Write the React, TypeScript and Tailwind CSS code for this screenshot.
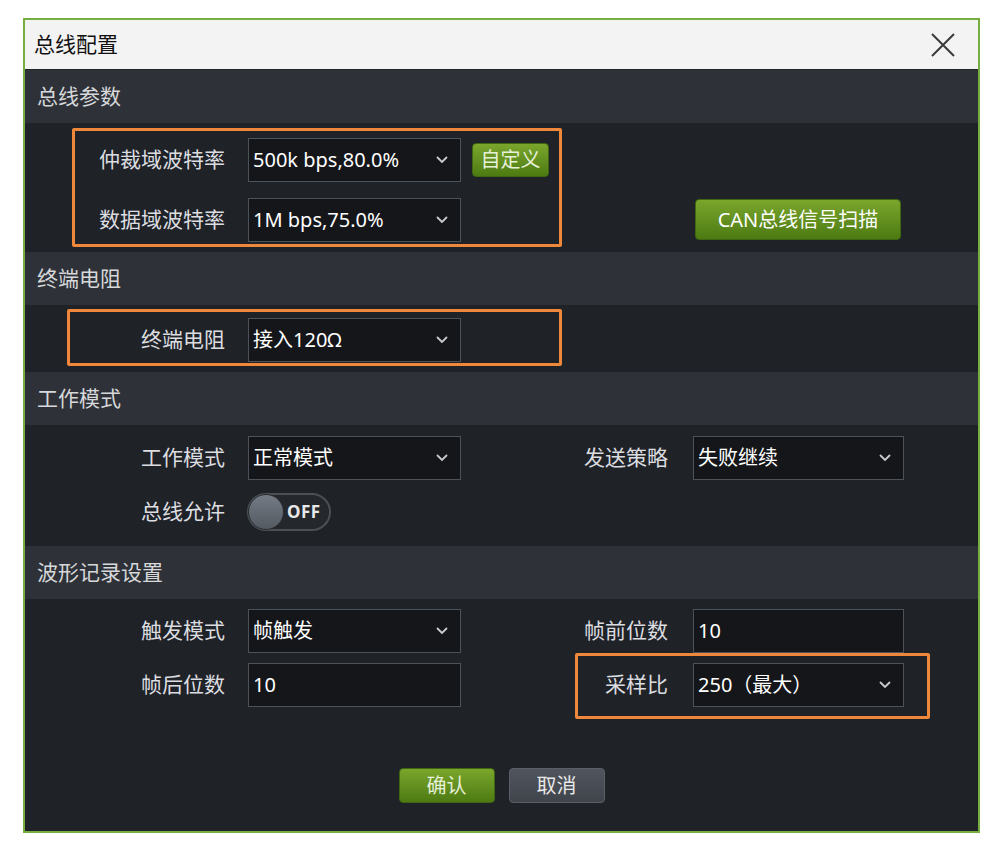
import type { ReactNode } from "react";

// Bus configuration dialog: dark themed form split into titled sections.

function SectionHeader({ title }: { title: string }) {
  return (
    <div className="h-[53px] bg-[#2e3238] flex items-center pl-[12px] text-[21px] text-[#d6d8da]">
      {title}
    </div>
  );
}

function Label({ children, w = "w-[200px]" }: { children: ReactNode; w?: string }) {
  return <div className={`${w} shrink-0 text-right text-[21px] text-[#dcdde0] pr-0`}>{children}</div>;
}

function Chevron() {
  return (
    <svg width="12" height="8" viewBox="0 0 12 8" className="shrink-0">
      <path d="M1.5 1.5 L6 6 L10.5 1.5" fill="none" stroke="#c9ccd0" strokeWidth="1.8" strokeLinecap="round" />
    </svg>
  );
}

function Select({ value, w = "w-[213px]" }: { value: string; w?: string }) {
  return (
    <div
      className={`${w} h-[44px] shrink-0 flex items-center justify-between bg-[#14161a] border border-[#4c5259] pl-[4px] pr-[12px] text-[20px] text-white`}
    >
      <span>{value}</span>
      <Chevron />
    </div>
  );
}

function TextBox({ value, w = "w-[213px]" }: { value: string; w?: string }) {
  return (
    <div className={`${w} h-[44px] shrink-0 flex items-center bg-[#14161a] border border-[#4c5259] pl-[4px] text-[20px] text-white`}>
      {value}
    </div>
  );
}

function Highlight({ className }: { className: string }) {
  return <div className={`absolute pointer-events-none border-[3px] border-[#f0883b] rounded-[2px] ${className}`} />;
}

function Toggle() {
  return (
    <div className="relative w-[84px] h-[38px] rounded-full bg-[#24272c] border-2 border-[#4b5057] flex items-center">
      <div className="absolute left-[-1px] top-[-1px] w-[36px] h-[36px] rounded-full bg-gradient-to-b from-[#757b84] to-[#545a62] border border-[#2a2d31]" />
      <span className="ml-[38px] text-[17px] font-bold text-[#e8e8e8] tracking-[0.5px]">OFF</span>
    </div>
  );
}

export default function App() {
  return (
    <div className="min-h-[852px] bg-white pt-[18px] pl-[23px] font-['Noto_Sans','Noto_Sans_CJK_SC',sans-serif]">
      <div className="w-[957px] border-2 border-[#78ae3f] bg-[#1f2226]">
        {/* title bar */}
        <div className="h-[50px] bg-[#f3f3f3] flex items-center justify-between pl-[9px] pr-[22px] border-b border-[#22252a]">
          <span className="text-[21px] text-[#111]">总线配置</span>
          <svg width="26" height="26" viewBox="0 0 26 26">
            <path d="M2 2 L24 24 M24 2 L2 24" stroke="#3a3a3a" strokeWidth="2" />
          </svg>
        </div>

        {/* bus parameters */}
        <SectionHeader title="总线参数" />
        <div className="relative h-[129px] pt-[15px]">
          <div className="flex items-start">
            <div className="flex flex-col gap-[16px]">
              <div className="flex items-center">
                <Label>仲裁域波特率</Label>
                <div className="ml-[23px] flex items-center">
                  <Select value="500k bps,80.0%" />
                  <button className="ml-[11px] w-[77px] h-[34px] rounded-[4px] bg-gradient-to-b from-[#7aa62c] to-[#4d7b12] border border-[#3f6610] text-[20px] text-[#e6efd8]">
                    自定义
                  </button>
                </div>
              </div>
              <div className="flex items-center">
                <Label>数据域波特率</Label>
                <div className="ml-[23px]">
                  <Select value="1M bps,75.0%" />
                </div>
              </div>
            </div>
            <button className="ml-[146px] mt-[61px] w-[206px] h-[41px] rounded-[4px] bg-gradient-to-b from-[#7aa62c] to-[#4d7b12] border border-[#3f6610] text-[20px] text-white">
              CAN总线信号扫描
            </button>
          </div>
          <Highlight className="left-[47px] top-[5px] w-[490px] h-[119px]" />
        </div>

        {/* terminal resistor */}
        <SectionHeader title="终端电阻" />
        <div className="relative h-[67px] pt-[13px]">
          <div className="flex items-center">
            <Label>终端电阻</Label>
            <div className="ml-[23px]">
              <Select value="接入120Ω" />
            </div>
          </div>
          <Highlight className="left-[42px] top-[4px] w-[495px] h-[57px]" />
        </div>

        {/* work mode */}
        <SectionHeader title="工作模式" />
        <div className="h-[121px] pt-[11px] flex flex-col gap-[13px]">
          <div className="flex items-center">
            <Label>工作模式</Label>
            <div className="ml-[23px]">
              <Select value="正常模式" />
            </div>
            <Label w="w-[207px]">发送策略</Label>
            <div className="ml-[25px]">
              <Select value="失败继续" w="w-[211px]" />
            </div>
          </div>
          <div className="flex items-center">
            <Label>总线允许</Label>
            <div className="ml-[22px]">
              <Toggle />
            </div>
          </div>
        </div>

        {/* waveform recording */}
        <SectionHeader title="波形记录设置" />
        <div className="relative h-[232px] pt-[10px]">
          <div className="flex flex-col gap-[10px]">
            <div className="flex items-center">
              <Label>触发模式</Label>
              <div className="ml-[23px]">
                <Select value="帧触发" />
              </div>
              <Label w="w-[207px]">帧前位数</Label>
              <div className="ml-[25px]">
                <TextBox value="10" w="w-[211px]" />
              </div>
            </div>
            <div className="flex items-center">
              <Label>帧后位数</Label>
              <div className="ml-[23px]">
                <TextBox value="10" />
              </div>
              <Label w="w-[207px]">采样比</Label>
              <div className="ml-[25px]">
                <Select value="250（最大）" w="w-[211px]" />
              </div>
            </div>
          </div>
          <div className="mt-[61px] flex justify-center gap-[14px]">
            <button className="w-[96px] h-[35px] rounded-[4px] bg-gradient-to-b from-[#7aa62c] to-[#4d7b12] border border-[#3f6610] text-[20px] text-[#e6efd8]">
              确认
            </button>
            <button className="w-[96px] h-[35px] rounded-[4px] bg-gradient-to-b from-[#50555d] to-[#40444b] border border-[#5a5f67] text-[20px] text-[#e8e8e8]">
              取消
            </button>
          </div>
          <Highlight className="left-[550px] top-[54px] w-[355px] h-[66px]" />
        </div>
      </div>
    </div>
  );
}
